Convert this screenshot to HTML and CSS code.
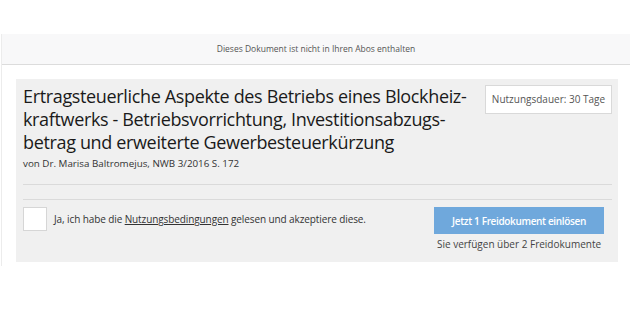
FILE: index.html
```html
<!DOCTYPE html>
<html lang="de">
<head>
<meta charset="utf-8">
<title>Freidokument</title>
<link rel="stylesheet" href="styles.css">
</head>
<body>
<div class="page">
  <div class="frame">
    <div class="notice">Dieses Dokument ist nicht in Ihren Abos enthalten</div>
    <div class="content">
      <div class="card">
        <div class="head">
          <div class="head-text">
            <h1 class="title">Ertragsteuerliche Aspekte des Betriebs eines Blockheiz-<br>kraftwerks - Betriebsvorrichtung, Investitionsabzugs-<br>betrag und erweiterte Gewerbesteuerkürzung</h1>
            <p class="meta">von Dr. Marisa Baltromejus, NWB 3/2016 S. 172</p>
          </div>
          <div class="badge">Nutzungsdauer: 30 Tage</div>
        </div>
        <div class="rule"></div>
        <div class="rule second"></div>
        <div class="actions">
          <label class="accept">
            <span class="checkbox"></span>
            <span class="accept-text">Ja, ich habe die <a class="terms" href="#">Nutzungsbedingungen</a> gelesen und akzeptiere diese.</span>
          </label>
          <div class="redeem">
            <button class="btn" type="button">Jetzt 1 Freidokument einlösen</button>
            <div class="hint">Sie verfügen über 2 Freidokumente</div>
          </div>
        </div>
      </div>
    </div>
  </div>
</div>
</body>
</html>
```
FILE: styles.css
```css
html, body {
  margin: 0;
  padding: 0;
  background: #ffffff;
  font-family: "Open Sans", "Noto Sans", Arial, sans-serif;
  color: #222;
}
.page {
  padding-top: 34px;
}
.frame {
  margin-left: 1px;
  border-left: 1px solid #ececec;
  height: 232px;
}
.notice {
  height: 30px;
  line-height: 30px;
  background: #f8f8f9;
  border-bottom: 1px solid #dcdcdc;
  text-align: center;
  font-size: 8.5px;
  color: #555;
}
.content {
  padding: 14px 12px 0 14px;
}
.card {
  background: #f0f0f0;
  padding: 6px 6px 10px 7px;
}
.head {
  display: flex;
  justify-content: space-between;
  align-items: flex-start;
}
.title {
  margin: 0;
  font-size: 18px;
  line-height: 23px;
  font-weight: 500;
  letter-spacing: -0.35px;
  white-space: nowrap;
  color: #1a1a1a;
}
.meta {
  margin: 2px 0 0;
  font-size: 9.8px;
  line-height: 16px;
  color: #333;
}
.badge {
  width: 125px;
  height: 27px;
  line-height: 27px;
  background: #fff;
  border: 1px solid #d9d9d9;
  text-align: center;
  font-size: 10px;
  color: #555;
}
.rule {
  height: 1px;
  background: #dadada;
  margin-top: 12px;
}
.rule.second {
  margin-top: 14px;
}
.actions {
  display: flex;
  justify-content: space-between;
  align-items: flex-start;
  margin-top: 7px;
  padding-right: 8px;
}
.accept {
  display: flex;
  align-items: center;
  gap: 7px;
  height: 24px;
}
.checkbox {
  width: 22px;
  height: 22px;
  background: #fff;
  border: 1px solid #d6d6d6;
}
.accept-text {
  font-size: 10px;
  letter-spacing: -0.1px;
  white-space: nowrap;
  color: #333;
}
.terms {
  color: #333;
  text-decoration: underline;
}
.redeem {
  width: 170px;
  text-align: center;
}
.btn {
  display: block;
  width: 170px;
  height: 27px;
  border: none;
  background: #6fa8dc;
  color: #fff;
  font-family: inherit;
  font-size: 10px;
  font-weight: 600;
  letter-spacing: -0.35px;
  padding: 0;
}
.hint {
  margin-top: 2px;
  font-size: 10px;
  line-height: 16px;
  white-space: nowrap;
  color: #444;
}
```
